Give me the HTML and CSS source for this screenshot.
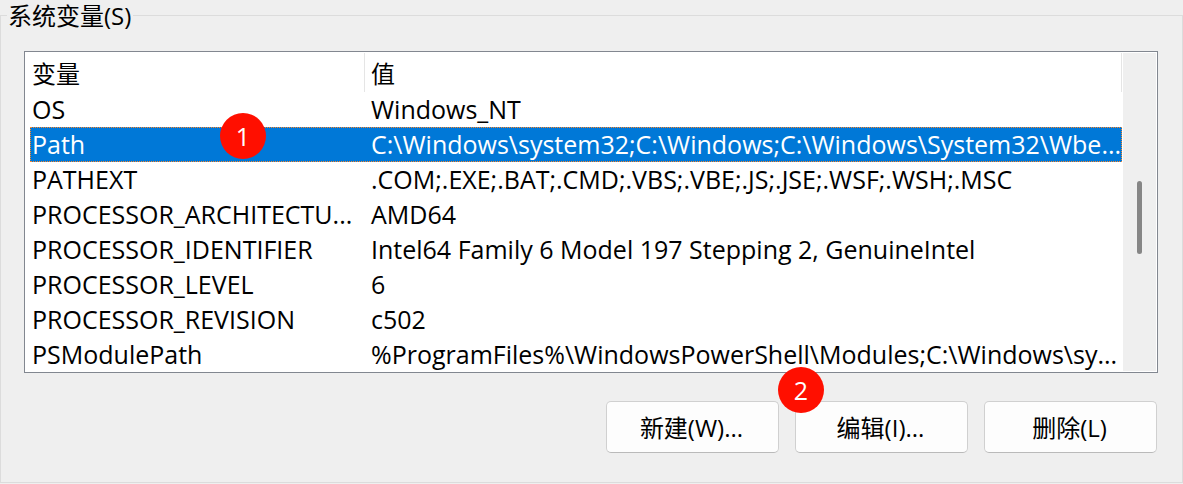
FILE: index.html
```
<!DOCTYPE html>
<html lang="zh-CN">
<head>
    <meta charset="utf-8">
    <meta name="viewport" content="width=device-width, initial-scale=1">
    <title>系统变量</title>

    <link rel="stylesheet" href="styles.css">
</head>
<body>
<fieldset class="group">
    <legend>系统变量(S)</legend>
    <div class="list-box">
        <table class="list">
            <thead>
                <tr>
                    <th class="col-name">变量</th>
                    <th>值</th>
                </tr>
            </thead>
            <tbody>
                <tr>
                    <td>OS</td>
                    <td>Windows_NT</td>
                </tr>
                <tr class="selected">
                    <td>Path<span class="badge badge-row">1</span></td>
                    <td>C:\Windows\system32;C:\Windows;C:\Windows\System32\Wbe...</td>
                </tr>
                <tr>
                    <td>PATHEXT</td>
                    <td>.COM;.EXE;.BAT;.CMD;.VBS;.VBE;.JS;.JSE;.WSF;.WSH;.MSC</td>
                </tr>
                <tr>
                    <td>PROCESSOR_ARCHITECTU...</td>
                    <td>AMD64</td>
                </tr>
                <tr>
                    <td>PROCESSOR_IDENTIFIER</td>
                    <td>Intel64 Family 6 Model 197 Stepping 2, GenuineIntel</td>
                </tr>
                <tr>
                    <td>PROCESSOR_LEVEL</td>
                    <td>6</td>
                </tr>
                <tr>
                    <td>PROCESSOR_REVISION</td>
                    <td>c502</td>
                </tr>
                <tr>
                    <td>PSModulePath</td>
                    <td>%ProgramFiles%\WindowsPowerShell\Modules;C:\Windows\sy...</td>
                </tr>
            </tbody>
        </table>
        <div class="scrollbar">
            <div class="thumb"></div>
        </div>
    </div>
    <div class="buttons">
        <button type="button">新建(W)...</button>
        <div class="marked">
            <button type="button">编辑(I)...</button>
            <span class="badge badge-button">2</span>
        </div>
        <button type="button">删除(L)</button>
    </div>
</fieldset>
</body>
</html>
```
FILE: styles.css
```
* {
    box-sizing: border-box;
}

body {
    margin: 0;
    background-color: #efefef;
    color: black;
    font-family: "Open Sans", "Noto Sans CJK SC", sans-serif;
    font-size: 24px;
}

.group {
    margin: 0;
    min-width: 0;
    padding: 20px 24px 29px 23px;
    border: solid 1px #dcdcdc;
}

.group legend {
    margin-left: -17px;
    padding: 1px 2px 1px 1px;
    line-height: 29px;
}

.list-box {
    display: flex;
    padding: 1px 1px 0px 5px;
    border: solid 1px #828790;
    background-color: white;
}

.list {
    flex: 1;
    table-layout: fixed;
    border-collapse: separate;
    border-spacing: 0;
    white-space: nowrap;
}

.list th {
    height: 39px;
    padding: 2px 0px 0px 6px;
    border-right: solid 1px #e5e5e5;
    font-weight: normal;
    line-height: 35px;
    text-align: left;
}

.list .col-name {
    width: 335px;
    padding-left: 2px;
}

.list td {
    position: relative;
    height: 35px;
    padding: 0px 0px 0px 6px;
    font-size: 25px;
    line-height: 35px;
}

.list td:first-child {
    padding-left: 2px;
}

.list .selected {
    background-color: #0078d7;
    color: white;
    outline: dotted 1px #ff8728;
    outline-offset: -1px;
}

.scrollbar {
    width: 33px;
    margin: 0px 0px 1px 1px;
    padding-top: 128px;
    background-color: #efefef;
}

.scrollbar .thumb {
    width: 5px;
    height: 73px;
    margin: 0px auto;
    border-radius: 3px;
    background-color: #868686;
}

.buttons {
    display: flex;
    justify-content: flex-end;
    gap: 16px;
    margin-top: 28px;
    padding-right: 1px;
}

.buttons button {
    width: 173px;
    height: 52px;
    padding: 0px 2px 2px 0px;
    border: solid 1px #d0d0d0;
    border-bottom-color: #bababa;
    border-radius: 5px;
    background-color: #fdfdfd;
    color: black;
    font-family: inherit;
    font-size: 24px;
}

.marked {
    position: relative;
}

.badge {
    position: absolute;
    width: 46px;
    height: 46px;
    border-radius: 50%;
    background-color: #ff0f00;
    color: white;
    font-size: 25px;
    line-height: 46px;
    text-align: center;
}

.badge-row {
    top: -14px;
    left: 190px;
}

.badge-button {
    top: -34px;
    left: -17px;
}
```
